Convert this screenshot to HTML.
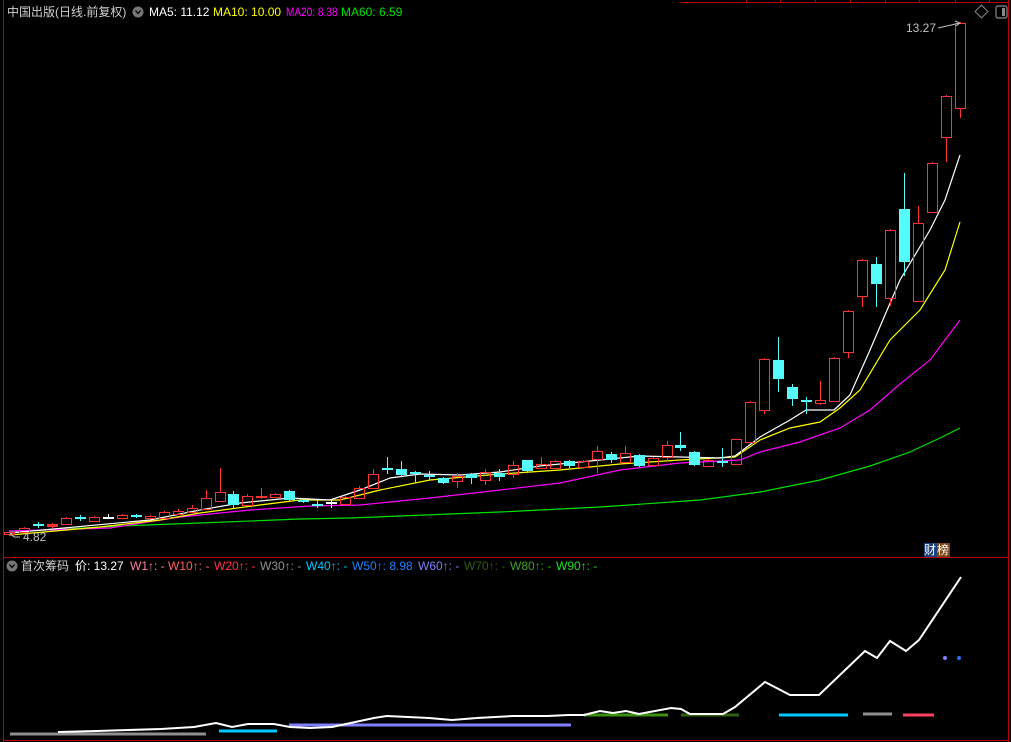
<!DOCTYPE html>
<html><head><meta charset="utf-8"><style>
html,body{margin:0;padding:0;background:#000;width:1011px;height:742px;overflow:hidden}
.t{position:absolute;font-family:"Liberation Sans","Noto Sans CJK SC",sans-serif;font-size:12px;white-space:nowrap;line-height:14px}
</style></head><body>
<svg width="1011" height="742" style="position:absolute;left:0;top:0" xmlns="http://www.w3.org/2000/svg">
<g stroke="#c00000" stroke-width="1" fill="none" shape-rendering="crispEdges">
<line x1="3.5" y1="0" x2="3.5" y2="742"/>
<line x1="1008.5" y1="0" x2="1008.5" y2="742"/>
<line x1="3" y1="557.5" x2="1008" y2="557.5"/>
<line x1="3" y1="740.5" x2="1008" y2="740.5"/>
<line x1="680" y1="2.5" x2="1008" y2="2.5"/>
<line x1="746.5" y1="0" x2="746.5" y2="3"/><line x1="780.5" y1="0" x2="780.5" y2="3"/><line x1="815.5" y1="0" x2="815.5" y2="3"/><line x1="850.5" y1="0" x2="850.5" y2="3"/><line x1="885.5" y1="0" x2="885.5" y2="3"/><line x1="919.5" y1="0" x2="919.5" y2="3"/><line x1="955.5" y1="0" x2="955.5" y2="3"/><line x1="989.5" y1="0" x2="989.5" y2="3"/>
</g>
<polyline fill="none" stroke="#00e000" stroke-width="1.2" points="10,532 120,526 200,523 300,519 350,518 400,516 500,512 600,507 700,500 760,492 820,480 870,466 910,452 940,438 960,428"/>
<polyline fill="none" stroke="#ff00ff" stroke-width="1.2" points="10,531 110,528 180,517 250,510 310,506 360,505 430,498 500,490 560,483 620,470 680,463 740,460 760,452 800,442 840,428 870,410 900,384 930,360 960,320"/>
<polyline fill="none" stroke="#ffff00" stroke-width="1.2" points="10,535 100,527 160,520 200,513 260,505 300,500 340,500 380,490 430,480 500,474 560,470 620,464 680,460 735,457 760,440 790,428 820,422 840,408 860,390 890,340 920,310 945,270 960,222"/>
<polyline fill="none" stroke="#ffffff" stroke-width="1.2" points="10,533 150,520 200,510 240,503 290,498 330,500 360,490 390,478 420,474 460,475 500,472 540,466 600,460 640,456 680,457 720,458 735,456 760,437 790,420 806,410 834,410 850,395 870,350 900,280 930,230 945,200 960,155"/>
<g id="c" stroke-width="1" shape-rendering="crispEdges"></g>
<g stroke-width="3" fill="none">
<line x1="10" y1="734" x2="206" y2="734" stroke="#909090"/>
<line x1="219" y1="731" x2="277" y2="731" stroke="#00c8ff"/>
<line x1="289" y1="725" x2="571" y2="725" stroke="#8080ff"/>
<line x1="584" y1="715" x2="668" y2="715" stroke="#3a9010"/>
<line x1="681" y1="715" x2="739" y2="715" stroke="#306010"/>
<line x1="779" y1="715" x2="848" y2="715" stroke="#00c8ff"/>
<line x1="863" y1="714" x2="892" y2="714" stroke="#909090"/>
<line x1="903" y1="715" x2="934" y2="715" stroke="#ff4060"/>
</g>
<circle cx="945" cy="658" r="2" fill="#8080ff"/><circle cx="959" cy="658" r="2" fill="#2070ff"/>
<polyline fill="none" stroke="#fff" stroke-width="2" points="58,732 97,731 161,729 194,727 216,723 232,727 248,724 274,724 290,727 310,728 332,727 374,718 387,716 429,718 452,720 477,718 513,716 548,716 568,715 584,715 600,711 613,713 626,711 639,714 671,708 681,709 690,714 723,714 735,707 765,682 790,695 819,695 865,651 877,658 890,641 906,651 919,640 961,577"/>
<polyline fill="none" stroke="#c0c0c0" stroke-width="1" points="938,28 960,23"/>
<polyline fill="none" stroke="#c0c0c0" stroke-width="1" points="955,21 960,23 956,26"/>
<polyline fill="none" stroke="#c0c0c0" stroke-width="1" points="10,533 14,537 20,537"/>
<rect x="977" y="7" width="9" height="9" transform="rotate(45 981.5 11.5)" fill="none" stroke="#888" stroke-width="1"/>
<rect x="996" y="6" width="11" height="12" rx="2" fill="none" stroke="#888" stroke-width="1.2"/>
<rect x="1002" y="8" width="3" height="8" fill="#888"/>
<circle cx="138" cy="12" r="5.5" fill="#777"/><path d="M135.5 10.5 L138 13.5 L140.5 10.5" stroke="#000" stroke-width="1.3" fill="none"/>
<circle cx="12" cy="566" r="5.5" fill="#777"/><path d="M9.5 564.5 L12 567.5 L14.5 564.5" stroke="#000" stroke-width="1.3" fill="none"/>
<rect x="924" y="543" width="13" height="14" fill="#1a3f7a"/><rect x="937" y="543" width="13" height="14" fill="#7a4510"/>
</svg>
<div class="t" style="left:7px;top:5px;color:#d0d0d0">中国出版(日线.前复权)</div>
<div class="t" style="left:149px;top:5px;color:#fff">MA5: 11.12</div>
<div class="t" style="left:213px;top:5px;color:#ffff00">MA10: 10.00</div>
<div class="t" style="left:286px;top:5px;color:#ff00ff;transform:scaleX(0.84);transform-origin:left">MA20: 8.38</div>
<div class="t" style="left:341px;top:5px;color:#00e000">MA60: 6.59</div>
<div class="t" style="left:906px;top:21px;color:#c0c0c0">13.27</div>
<div class="t" style="left:23px;top:530px;color:#c0c0c0">4.82</div>
<div class="t" style="left:924px;top:543px;color:#fff;font-size:12px;letter-spacing:1px">财榜</div>
<div class="t" style="left:21px;top:559px;color:#d0d0d0">首次筹码</div>
<div class="t" style="left:75px;top:559px;color:#fff">价: 13.27</div>
<div class="t" style="left:130px;top:559px;color:#ff80a0">W1↑: -</div>
<div class="t" style="left:168px;top:559px;color:#ff6060">W10↑: -</div>
<div class="t" style="left:214px;top:559px;color:#ff3050">W20↑: -</div>
<div class="t" style="left:260px;top:559px;color:#909090">W30↑: -</div>
<div class="t" style="left:306px;top:559px;color:#00c8ff">W40↑: -</div>
<div class="t" style="left:352px;top:559px;color:#1880ff">W50↑: 8.98</div>
<div class="t" style="left:418px;top:559px;color:#8080ff">W60↑: -</div>
<div class="t" style="left:464px;top:559px;color:#306010">W70↑: -</div>
<div class="t" style="left:510px;top:559px;color:#40a020">W80↑: -</div>
<div class="t" style="left:556px;top:559px;color:#20e020">W90↑: -</div>
<script>
var d=[
[9,'r',532,534,530,536],[24,'r',528,532,527,533],[38,'x',525,525,522,528],[52,'f',524,527,523,528],
[66,'r',518,524,517,525],[80,'x',518,518,515,521],[94,'r',517,521,516,522],[108,'w',518,518,514,519],
[122,'r',515,518,514,519],[136,'c',515,517,514,518],[150,'r',516,518,515,519],[164,'r',512,518,511,519],
[178,'r',511,514,509,515],[192,'r',508,512,505,513],[206,'r',498,509,490,510],[220,'r',492,501,468,502],
[233,'c',494,505,491,508],[247,'r',496,505,494,506],[261,'f',496,498,488,499],[275,'r',494,497,493,498],
[289,'c',491,500,490,501],[303,'c',500,502,499,503],[317,'x',505,505,500,508],[331,'w',503,503,500,508],
[345,'r',497,504,495,505],[359,'r',488,498,486,499],[373,'r',474,488,469,489],[387,'x',469,469,457,474],
[401,'c',469,475,461,477],[415,'x',473,473,471,483],[429,'c',475,477,471,480],[443,'c',478,483,477,484],
[457,'r',476,481,473,488],[471,'c',474,478,473,484],[485,'r',472,480,469,485],[499,'c',473,477,469,481],
[513,'r',465,474,461,478],[527,'c',460,471,460,472],[541,'r',464,468,457,469],[555,'r',461,468,460,469],
[569,'c',461,466,460,468],[583,'r',461,467,460,468],[597,'r',451,459,446,473],[611,'c',454,460,452,463],
[625,'r',453,462,446,463],[639,'c',455,466,454,467],[653,'r',458,465,457,466],[667,'r',445,457,441,462],
[680,'c',445,448,432,451],[694,'c',452,465,451,466],[708,'r',460,466,459,467],[722,'x',462,462,448,467],
[736,'r',439,464,439,465],[750,'r',402,442,401,442],[764,'r',359,410,358,414],[778,'c',360,379,337,392],
[792,'c',387,399,384,406],[806,'x',401,401,397,414],[820,'r',400,403,381,405],[834,'r',358,401,357,402],
[848,'r',311,352,310,358],[862,'r',260,296,259,307],[876,'c',264,284,257,307],[890,'r',230,298,229,306],
[904,'c',209,262,173,276],[918,'r',223,301,206,302],[932,'r',163,212,162,213],[946,'r',96,137,95,162],
[960,'r',23,108,22,118]];
var s='';
d.forEach(function(a){var x=a[0],t=a[1],o=a[2],c=a[3],h=a[4],l=a[5];
var col=(t=='r'||t=='f')?'#ff3232':(t=='w'?'#ffffff':'#54fcfc');
if(h<o)s+='<line x1="'+(x+.5)+'" y1="'+h+'" x2="'+(x+.5)+'" y2="'+o+'" stroke="'+col+'"/>';
if(l>c)s+='<line x1="'+(x+.5)+'" y1="'+c+'" x2="'+(x+.5)+'" y2="'+l+'" stroke="'+col+'"/>';
if(t=='r')s+='<rect x="'+(x-4.5)+'" y="'+(o+.5)+'" width="10" height="'+Math.max(c-o,1)+'" fill="none" stroke="'+col+'"/>';
else if(t=='x'||t=='w')s+='<rect x="'+(x-5)+'" y="'+(o-1)+'" width="11" height="2" fill="'+col+'" stroke="none"/>';
else s+='<rect x="'+(x-5)+'" y="'+o+'" width="11" height="'+Math.max(c-o,2)+'" fill="'+col+'" stroke="none"/>';
});
document.getElementById('c').innerHTML=s;
</script>
</body></html>
